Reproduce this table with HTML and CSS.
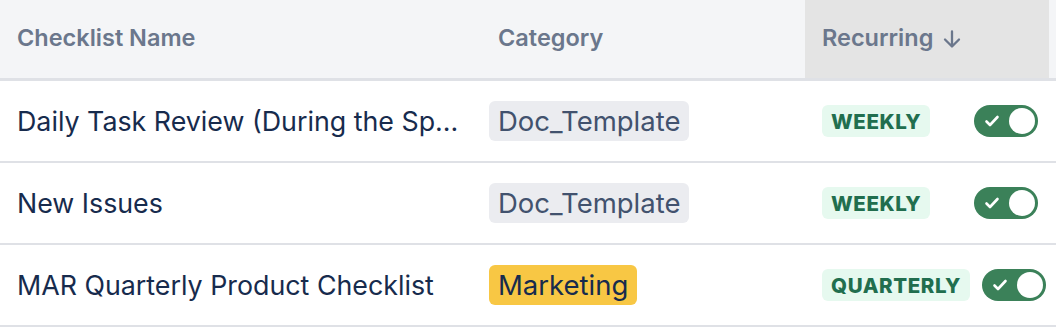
FILE: index.html
```html
<!DOCTYPE html>
<html lang="en">
<head>
<meta charset="utf-8">
<title>Checklists</title>
<link rel="stylesheet" href="styles.css">
</head>
<body>
<div class="table">
  <div class="row head">
    <div class="cell c-name">Checklist Name</div>
    <div class="cell c-cat">Category</div>
    <div class="cell c-rec sorted">Recurring
      <svg class="arrow" width="20" height="20" viewBox="0 0 20 20" aria-hidden="true"><path d="M10 2.5v15M3 10.5l7 7 7-7" fill="none" stroke="currentColor" stroke-width="2.3" stroke-linecap="round" stroke-linejoin="round"/></svg>
    </div>
    <div class="cell c-end"></div>
  </div>

  <div class="row">
    <div class="cell c-name">Daily Task Review (During the Sp...</div>
    <div class="cell c-cat"><span class="tag tag-grey">Doc_Template</span></div>
    <div class="cell c-rec">
      <span class="loz-wrap"><span class="lozenge">Weekly</span></span>
      <span class="toggle"><svg class="check" width="16" height="14" viewBox="0 0 16 14"><path d="M2.5 7.5l3.5 3.5 7.5-8" fill="none" stroke="#fff" stroke-width="2.6" stroke-linecap="round" stroke-linejoin="round"/></svg><span class="knob"></span></span>
    </div>
    <div class="cell c-end"></div>
  </div>

  <div class="row">
    <div class="cell c-name">New Issues</div>
    <div class="cell c-cat"><span class="tag tag-grey">Doc_Template</span></div>
    <div class="cell c-rec">
      <span class="loz-wrap"><span class="lozenge">Weekly</span></span>
      <span class="toggle"><svg class="check" width="16" height="14" viewBox="0 0 16 14"><path d="M2.5 7.5l3.5 3.5 7.5-8" fill="none" stroke="#fff" stroke-width="2.6" stroke-linecap="round" stroke-linejoin="round"/></svg><span class="knob"></span></span>
    </div>
    <div class="cell c-end"></div>
  </div>

  <div class="row">
    <div class="cell c-name">MAR Quarterly Product Checklist</div>
    <div class="cell c-cat"><span class="tag tag-yellow">Marketing</span></div>
    <div class="cell c-rec">
      <span class="loz-wrap"><span class="lozenge">Quarterly</span></span>
      <span class="toggle"><svg class="check" width="16" height="14" viewBox="0 0 16 14"><path d="M2.5 7.5l3.5 3.5 7.5-8" fill="none" stroke="#fff" stroke-width="2.6" stroke-linecap="round" stroke-linejoin="round"/></svg><span class="knob"></span></span>
    </div>
    <div class="cell c-end"></div>
  </div>
</div>
</body>
</html>
```

FILE: styles.css
```css
* { box-sizing: border-box; }
html, body { margin: 0; padding: 0; background: #fff; }
body {
  font-family: Inter, "Noto Sans", "Liberation Sans", sans-serif;
  color: #172b4d;
  width: 1056px;
  overflow: hidden;
}
.table { display: flex; flex-direction: column; }
.row {
  display: grid;
  grid-template-columns: 481px 324px 244px 1fr;
  height: 82px;
  border-bottom: 2px solid #dfe1e6;
}
.row.head {
  height: 81px;
  background: #f4f5f7;
  border-bottom: 3px solid #dfe1e6;
}
.cell {
  display: flex;
  align-items: center;
  white-space: nowrap;
  overflow: hidden;
  min-width: 0;
}
.head .cell {
  font-size: 23.5px;
  font-weight: 600;
  color: #6b778c;
  padding: 0 17px 3px;
}
.head .sorted { background: #e4e4e4; gap: 9px; }
.arrow { display: block; margin-top: 2px; }
.c-name { padding-left: 17px; font-size: 26.8px; }
.c-cat { padding-left: 8px; }
.c-rec { padding-left: 17px; gap: 12px; }
.tag {
  display: inline-flex;
  align-items: center;
  height: 40px;
  padding: 0 9px;
  border-radius: 6px;
  font-size: 27.5px;
}
.tag-grey { background: #ebecf0; color: #42526e; }
.tag-yellow { background: #f8c744; color: #172b4d; }
.loz-wrap { display: inline-flex; min-width: 140px; }
.lozenge {
  display: inline-flex;
  align-items: center;
  height: 32px;
  padding: 0 9px;
  border-radius: 6px;
  background: #e6f9ef;
  color: #216e4e;
  font-size: 20.5px;
  font-weight: 800;
  letter-spacing: 0.6px;
  text-transform: uppercase;
}
.toggle {
  display: inline-flex;
  align-items: center;
  justify-content: space-between;
  width: 64px;
  height: 32px;
  padding: 0 3px 0 10px;
  border-radius: 16px;
  background: #3b8159;
  flex: none;
}
.check { display: block; }
.knob {
  width: 26px;
  height: 26px;
  border-radius: 50%;
  background: #fff;
}
```
